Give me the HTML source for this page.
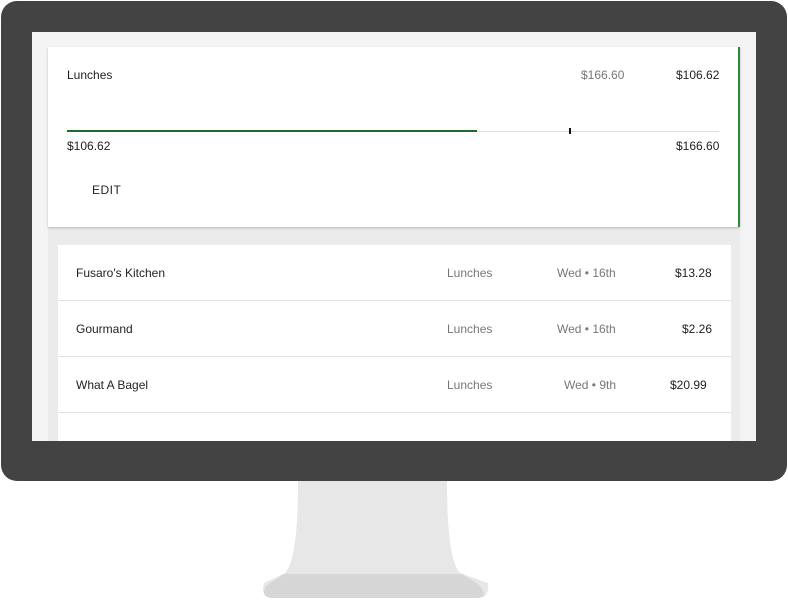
<!DOCTYPE html>
<html><head><style>
*{margin:0;padding:0;box-sizing:border-box}
body{width:788px;height:600px;background:#fff;position:relative;overflow:hidden;font-family:"Liberation Sans",sans-serif;font-size:12px;color:#222}
.frame{position:absolute;left:1px;top:1px;width:786px;height:480px;background:#434343;border-radius:16px}
.screen{position:absolute;left:32px;top:32px;width:724px;height:409px;background:#f4f4f4;overflow:hidden}
.card{position:absolute;left:16px;top:15px;width:692px;height:180px;background:#fff;border-right:2px solid #2e8b3e;box-shadow:0 1px 2px rgba(0,0,0,.25)}
.grey{position:absolute;left:16px;top:196px;width:692px;height:220px;background:#ebebeb}
.list{position:absolute;left:26px;top:213px;width:673px;height:220px;background:#fff}
.row{position:absolute;left:0;width:673px;height:56px;border-bottom:1px solid #e2e2e2}
.t{position:absolute;white-space:nowrap}
.g{color:#777}
</style></head><body>
<svg style="position:absolute;left:0;top:0" width="788" height="600">
<path d="M298 481 L447 481 Q447 560 460 573 L488 583 Q490 597 478 598 L272 598 Q260 597 264 583 L285 573 Q298 560 298 481Z" fill="#e7e7e7"/>
<path d="M284 574 L462 574 L478 584 Q490 597 478 598 L272 598 Q260 597 266 586Z" fill="#d6d6d6"/>
</svg>
<div class="frame"></div>
<div class="screen">
<div class="grey"></div>
<div class="card">
<div class="t" style="left:19px;top:21px">Lunches</div>
<div class="t g" style="left:533px;top:21px">$166.60</div>
<div class="t" style="left:628px;top:21px">$106.62</div>
<div style="position:absolute;left:19px;top:84px;width:652px;height:1px;background:#ddd"></div>
<div style="position:absolute;left:19px;top:83px;width:410px;height:2px;background:#1f6b2b"></div>
<div style="position:absolute;left:521px;top:81px;width:2px;height:6px;background:#111"></div>
<div class="t" style="left:19px;top:92px">$106.62</div>
<div class="t" style="left:628px;top:92px">$166.60</div>
<div class="t" style="left:44px;top:136px;letter-spacing:.5px">EDIT</div>
</div>
<div class="list">
<div class="row" style="top:0"><div class="t" style="left:18px;top:21px">Fusaro's Kitchen</div><div class="t g" style="left:389px;top:21px">Lunches</div><div class="t g" style="left:499px;top:21px">Wed • 16th</div><div class="t" style="left:617px;top:21px">$13.28</div></div>
<div class="row" style="top:56px"><div class="t" style="left:18px;top:21px">Gourmand</div><div class="t g" style="left:389px;top:21px">Lunches</div><div class="t g" style="left:499px;top:21px">Wed • 16th</div><div class="t" style="left:624px;top:21px">$2.26</div></div>
<div class="row" style="top:112px"><div class="t" style="left:18px;top:21px">What A Bagel</div><div class="t g" style="left:389px;top:21px">Lunches</div><div class="t g" style="left:506px;top:21px">Wed • 9th</div><div class="t" style="left:612px;top:21px">$20.99</div></div>
</div>
</div>
</body></html>
